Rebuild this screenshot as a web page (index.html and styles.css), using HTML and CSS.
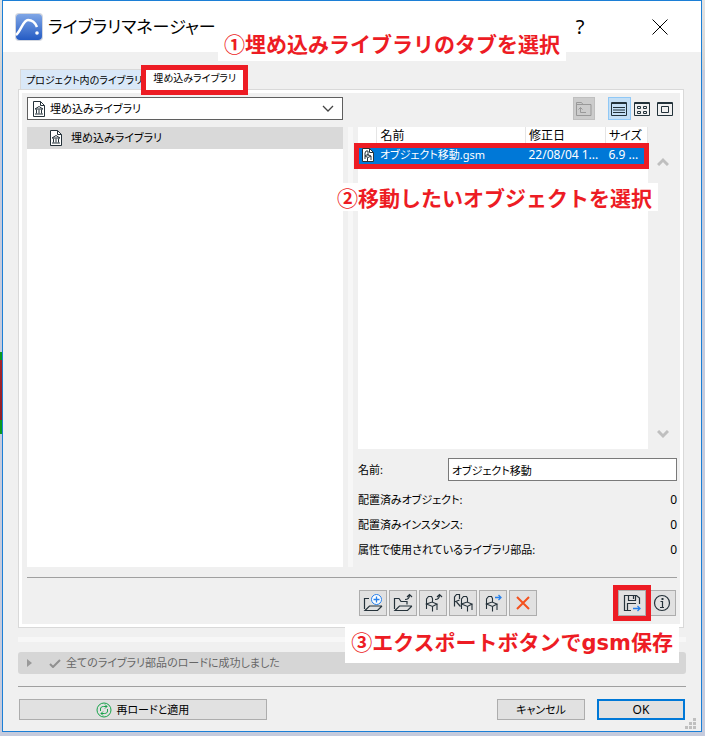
FILE: index.html
```html
<!DOCTYPE html>
<html lang="ja">
<head>
<meta charset="utf-8">
<meta name="viewport" content="width=device-width, initial-scale=1">
<title>ライブラリマネージャー</title>
<link rel="stylesheet" href="styles.css">
</head>
<body>
<svg class="defs" aria-hidden="true">
  <symbol id="library" viewBox="0 0 14 18">
    <path d="M1.500 1.500h7l4 4v11h-11z" fill="#fff" stroke="#25323a"/>
    <path d="M8.500 1.500v4h4M3 9l4-2.500 4 2.500zM4.500 9.500v4M7 9.500v4M9.500 9.500v4M3 14h8" fill="none" stroke="#25323a"/>
  </symbol>
  <symbol id="chair" viewBox="0 0 14 18">
    <path d="M1.500 15V5L3.500 2.500h3L7.500 4.500V8M1.500 10L7 8l5 2-4.500 2.500zM7.500 12.500V17.500M12 10v6" fill="none" stroke="#25323a" stroke-width="1.100"/>
  </symbol>
</svg>
<main class="dialog">
  <header class="titlebar">
    <svg class="logo" viewBox="0 0 28 28" aria-hidden="true">
      <defs><linearGradient id="blue" x1="0" y1="0" x2="0" y2="1"><stop offset="0" stop-color="#7fa6e6"/><stop offset="1" stop-color="#245bc4"/></linearGradient></defs>
      <rect x="0" y="0" width="28" height="28" rx="4" fill="#d3d7df"/>
      <rect x="1" y="1" width="26" height="26" rx="4" fill="url(#blue)"/>
      <path d="M1 22C6 18 8 7 13 7c4 0 7 2 9 7" fill="none" stroke="#fff" stroke-width="2.500"/>
      <circle cx="22" cy="20" r="1.800" fill="#fff"/>
    </svg>
    <h1>ライブラリマネージャー</h1>
    <button class="caption help" aria-label="ヘルプ">?</button>
    <button class="caption close" aria-label="閉じる"><svg viewBox="0 0 16 16"><path d="M.5.5l15 15M15.500.5l-15 15" stroke="#000" fill="none"/></svg></button>
    <p class="note note-tab">①埋め込みライブラリのタブを選択</p>
  </header>

  <div class="body">
    <nav class="tabs" role="tablist">
      <button class="tab" role="tab" aria-selected="false">プロジェクト内のライブラリ</button>
      <button class="tab active" role="tab" aria-selected="true">埋め込みライブラリ</button>
    </nav>

    <section class="panel">
      <div class="bar">
        <div class="combo">
          <svg class="doc"><use href="#library"/></svg>
          <select aria-label="ライブラリ"><option>埋め込みライブラリ</option></select>
          <svg class="chevron" viewBox="0 0 12 8"><path d="M1 1l5 5 5-5" fill="none" stroke="#444" stroke-width="1.300"/></svg>
        </div>
        <div class="views">
          <button class="view up" disabled aria-label="上へ"><svg viewBox="0 0 22 22"><path d="M3.500 17.500v-13h5l1.500 2h8v11zM3.500 6.500H10M13 14.500H7.500v-5M5.500 11.500l2-2 2 2" fill="none" stroke="#999"/></svg></button>
          <button class="view on" aria-label="リスト"><svg viewBox="0 0 22 22"><path d="M3.500 4.500h15v13h-15zM3 5.500h16M5 9.500h12M5 12h12M5 14.500h12" stroke="#22323a" fill="none"/></svg></button>
          <button class="view" aria-label="小アイコン"><svg viewBox="0 0 22 22"><path d="M3.500 4.500h15v13h-15zM3 5.500h16M6.500 8.500h3v2h-3zM12.500 8.500h3v2h-3zM6.500 13.500h3v2h-3zM12.500 13.500h3v2h-3z" fill="none" stroke="#22323a"/></svg></button>
          <button class="view" aria-label="大アイコン"><svg viewBox="0 0 22 22"><path d="M3.500 4.500h15v13h-15zM3 5.500h16M7.500 8.500h7v6h-7z" fill="none" stroke="#22323a"/></svg></button>
        </div>
      </div>

      <div class="split">
        <ul class="tree">
          <li><svg class="doc"><use href="#library"/></svg>埋め込みライブラリ</li>
        </ul>
        <div class="splitter"></div>
        <div class="detail">
          <div class="listing">
            <div class="list">
              <table>
                <colgroup><col class="c-icon"><col><col class="c-date"><col class="c-size"></colgroup>
                <thead><tr><th></th><th>名前</th><th>修正日</th><th>サイズ</th></tr></thead>
                <tbody><tr>
                  <td class="mark"><svg class="item" viewBox="0 0 14 16"><path d="M1.500 1.500h7l4 4v9h-11z" fill="#fff" stroke="#25323a"/><path d="M8.500 1.500v4h4M4 12V6l1-2h2v5M4 9l2.500-1.500L10 9l-3 1.500zM6.500 11v3M10 9v4" fill="none" stroke="#25323a"/></svg></td>
                  <td class="file">オブジェクト移動.gsm</td><td>22/08/04 1...</td><td>6.9 ...</td>
                </tr></tbody>
              </table>
              <p class="note note-row">②移動したいオブジェクトを選択</p>
            </div>
            <div class="scroll">
              <svg viewBox="0 0 12 9"><path d="M1 8l5-5 5 5" fill="none" stroke="#bfbfbf" stroke-width="3"/></svg>
              <svg viewBox="0 0 12 9"><path d="M1 1l5 5 5-5" fill="none" stroke="#bfbfbf" stroke-width="3"/></svg>
            </div>
          </div>
          <div class="field"><label for="name">名前:</label><input id="name" type="text" value="オブジェクト移動"></div>
          <dl>
            <div><dt>配置済みオブジェクト:</dt><dd>0</dd></div>
            <div><dt>配置済みインスタンス:</dt><dd>0</dd></div>
            <div><dt>属性で使用されているライブラリ部品:</dt><dd>0</dd></div>
          </dl>
        </div>
      </div>

      <div class="tools">
        <button aria-label="新規フォルダ"><svg viewBox="0 0 28 26"><path d="M5.500 19V8.500H10M23 16h-12.500L6 20.500h12.500L23 16" class="ink"/><circle cx="17.500" cy="9.500" r="5" fill="#fff" stroke="#2680eb"/><path d="M14.500 9.500h6M17.500 6.500v6" stroke="#2680eb" stroke-width="1.300"/></svg></button>
        <button aria-label="フォルダ追加"><svg viewBox="0 0 28 26"><path d="M5.500 19V8.500H10l2 3h6v3M23 16h-12.500L6 20.500h12.500L23 16M16 9.500c3 0 4.500-1 4.500-4.500M18 7l2.500-2.500L23 7" class="ink"/></svg></button>
        <button aria-label="オブジェクト追加"><svg viewBox="0 0 28 26"><use href="#chair" x="6" y="4" width="14" height="18"/><path d="M16 9.500c3 0 4.500-1 4.500-4.500M18 7l2.500-2.500L23 7" class="ink"/></svg></button>
        <button aria-label="複製"><svg viewBox="0 0 28 26"><path d="M5.500 16.500V7l2-2.500H10.500V9M5.500 12l5-2M7.500 12l4 4.500" class="ink"/><use href="#chair" x="11" y="4" width="14" height="18"/></svg></button>
        <button aria-label="移動"><svg viewBox="0 0 28 26"><use href="#chair" x="6" y="4" width="14" height="18"/><path d="M16 7.500h6M19.500 5L22 7.500 19.500 10" fill="none" stroke="#2680eb" stroke-width="1.300"/></svg></button>
        <button aria-label="削除"><svg viewBox="0 0 28 26"><path d="M8 7l12 12M20 7L8 19" stroke="#f4511e" stroke-width="2"/></svg></button>
        <button class="export" aria-label="エクスポート"><svg viewBox="0 0 28 26"><path d="M13 20.500H6.500V5.500h12L21.500 8v6M10.500 5.500v5h7v-5M15.500 6v3M9.500 20v-6.500H18" class="ink"/><path d="M15 18.500h7M19.500 16l2.500 2.500-2.500 2.500" fill="none" stroke="#2680eb" stroke-width="1.300"/></svg></button>
        <button aria-label="情報"><svg viewBox="0 0 28 26"><circle cx="14" cy="13" r="7.500" class="ink"/><path d="M12.500 11.500h2V17M12 17.500h4" class="ink"/><path d="M13.500 8h2v2h-2z" fill="#25323a"/></svg></button>
        <p class="note note-export">③エクスポートボタンで<span>gsm</span>保存</p>
      </div>
    </section>

    <div class="strip"></div>
    <div class="status">
      <svg class="tri" viewBox="0 0 5 8"><path d="M0 0l5 4-5 4z" fill="#999"/></svg>
      <svg class="check" viewBox="0 0 12 9"><path d="M1 5l3 3 7-7" fill="none" stroke="#909090" stroke-width="2"/></svg>
      <span>全てのライブラリ部品のロードに成功しました</span>
    </div>
    <footer>
      <button class="push reload"><svg viewBox="0 0 16 16"><g fill="none" stroke="#16a34a"><circle cx="8" cy="8" r="7"/><path d="M4.500 9V7c0-1.500 1-2.500 3-2.500H11M9 2.500l2 2-2 2M11.500 7v2c0 1.500-1 2.500-3 2.500H5M7 9.500l-2 2 2 2"/></g></svg>再ロードと適用</button>
      <button class="push">キャンセル</button>
      <button class="push ok">OK</button>
    </footer>
  </div>
  <svg class="grip" viewBox="0 0 11 11" aria-hidden="true"><path d="M8 0h3v3H8zM4 4h3v3H4zM8 4h3v3H8zM0 8h3v3H0zM4 8h3v3H4zM8 8h3v3H8z" fill="#bfbfbf"/></svg>
</main>
</body>
</html>
```

FILE: styles.css
```css
* { box-sizing: border-box; }

body {
  margin: 0;
  padding: 0 3px 3px 2px;
  background:
    linear-gradient(#a5252c, #8f2028) 0 360px / 2px 60px no-repeat,
    linear-gradient(#0a9a1e, #0a9a1e) 0 352px / 2px 82px no-repeat,
    linear-gradient(#e3e3e3, #d2d2d2) 0 0 / 100% 70px no-repeat,
    #c5cbdd;
  color: #000;
  font: 11px/18px "Noto Sans", "Noto Sans CJK JP", sans-serif;
  font-feature-settings: "palt";
}

button, input, select { font: inherit; font-feature-settings: inherit; color: inherit; margin: 0; }
button { padding: 0; border: 0; background: none; }
svg { display: block; flex: none; }
p, h1, ul, dl, dd { margin: 0; padding: 0; }
.defs { position: absolute; width: 0; height: 0; }
.ink { fill: none; stroke: #25323a; stroke-width: 1.2; }

.dialog {
  position: relative;
  border: 1px solid #1c7fd6;
  background: #f0f0f0;
}

.titlebar {
  position: relative;
  display: flex;
  align-items: center;
  height: 51px;
  padding: 0 33px 0 12px;
  background: #fff;
}
.logo { width: 28px; height: 28px; margin-right: 5px; }
h1 { flex: 1; font-size: 17px; font-weight: 400; line-height: 24px; }
.caption { width: 16px; height: 24px; }
.help { font-size: 20px; line-height: 24px; margin-right: 64px; }
.close svg { width: 16px; height: 16px; }

/* Tutorial callouts */
.note {
  position: absolute;
  z-index: 2;
  padding: 0 6px;
  background: #fff;
  color: #ed1c24;
  font: bold 21px/28px "Noto Sans CJK JP", sans-serif;
  font-feature-settings: normal;
  white-space: nowrap;
}
.note span { font-family: "DejaVu Sans", sans-serif; }
.note-tab { left: 215px; top: 28px; padding-bottom: 4px; }
.note-row { left: -27px; top: 56px; }
.note-export { right: -2px; top: 47px; line-height: 32px; padding-bottom: 4px; }
.tab.active::after, .mark::after, .export::after {
  content: "";
  position: absolute;
  z-index: 1;
  border: 5px solid #ed1c24;
}

.body { padding: 11px 15px; }
.tabs { display: flex; height: 26px; padding: 0 2px; align-items: flex-end; font-size: 10px; }
.tab {
  height: 20px;
  padding: 0 2px 0 5px;
  border: 1px solid #d9d9d9;
  border-bottom: 0;
  background: #d9e8f8;
  white-space: nowrap;
}
.tab.active {
  position: relative;
  height: 26px;
  margin: 0 0 -2px;
  padding: 0 8px;
  background: #fff;
  border: 0;
}
.tab.active::after { inset: 0 -4px -4px; }

.panel {
  margin-right: 2px;
  padding: 5px;
  border: 1px solid #d9d9d9;
  outline: 3px solid #fff;
  outline-offset: -4px;
}
.bar { display: flex; justify-content: space-between; margin: 2px 1px 7px 3px; }
.combo {
  display: flex;
  align-items: center;
  width: 48.6%;
  height: 23px;
  padding: 0 8px 0 4px;
  border: 1px solid #5f5f5f;
  background: #fff;
}
.combo select { flex: 1; min-width: 0; padding: 0; border: 0; background: none; appearance: none; }
.doc { width: 14px; height: 18px; margin-right: 4px; }
.chevron { width: 12px; height: 8px; }
.views { display: flex; gap: 0; }
.view { width: 23px; height: 23px; border: 1px solid transparent; }
.view svg { width: 22px; height: 22px; margin: -1px; }
.up { width: 22px; margin-right: 13px; border-color: #bfbfbf; background: #ccc; }
.on { border-color: #90c8f6; background: #c4dff5; }

.split { display: grid; grid-template-columns: 48.6% 5px 1fr; column-gap: 5px; height: 440px; margin: 0 1px 1px 3px; }
.tree { background: #fff; list-style: none; }
.tree li { display: flex; align-items: center; height: 22px; padding-left: 22px; background: #d9d9d9; }
.tree .doc { margin-right: 8px; }
.splitter { background: #f7f7f7; }
.detail { min-width: 0; }
.listing { display: flex; height: 322px; }
.list { position: relative; flex: 1; background: #fff; }
table { width: 100%; border-collapse: collapse; table-layout: fixed; font-size: 12px; }
.c-icon { width: 19px; }
.c-date { width: 80px; }
.c-size { width: 42px; }
th, td { padding: 0 0 0 3px; font-weight: 400; text-align: left; white-space: nowrap; }
th { height: 18px; border-right: 1px solid #e5e5e5; }
tbody tr { position: relative; background: #0078d7; color: #fff; }
td { height: 20px; }
.file { font-size: 11px; }
.mark::after { inset: -2px -1px -4px -4px; }
.item { width: 14px; height: 16px; }
.scroll { display: flex; flex-direction: column; justify-content: space-between; width: 29px; padding: 30px 9px 10px; }
.scroll svg { width: 12px; height: 9px; }

.field { display: flex; align-items: center; margin: 9px 0 8px; }
.field label { width: 90px; }
.field input { flex: 1; min-width: 0; height: 23px; padding: 0 3px; border: 1px solid #7a7a7a; border-radius: 0; background: #fff; }
dl div { display: flex; justify-content: space-between; height: 25px; line-height: 22px; }
dd { font-size: 12px; }

.tools {
  position: relative;
  display: flex;
  gap: 2px;
  margin: 10px 1px 0 3px;
  padding: 12px 1px 6px calc(48.6% + 14px);
  border-top: 1px solid #a0a0a0;
}
.tools button { width: 28px; height: 26px; border: 1px solid #adadad; background: #e1e1e1; }
.tools svg { width: 28px; height: 26px; margin: -1px; }
.tools .export { position: relative; margin-left: auto; }
.export::after { inset: -6px; }

.strip { height: 5px; margin: 9px 0 10px; background: #f7f7f7; }
.status {
  display: flex;
  align-items: center;
  height: 22px;
  padding-left: 9px;
  border-radius: 3px;
  background: #d6d6d6;
  color: #666;
}
.tri { width: 5px; height: 8px; margin-right: 17px; }
.check { width: 12px; height: 9px; margin-right: 5px; }

footer { display: flex; gap: 12px; margin-top: 12px; padding: 12px 1px 0; border-top: 1px solid #a0a0a0; }
.push { display: flex; align-items: center; justify-content: center; width: 88px; height: 21px; border: 1px solid #adadad; background: #e1e1e1; }
.reload { width: 37.2%; margin-right: auto; gap: 4px; }
.reload svg { width: 16px; height: 16px; }
.ok { border: 2px solid #0078d7; font-size: 12px; }
.grip { position: absolute; right: 5px; bottom: 2px; width: 11px; height: 11px; }
```
